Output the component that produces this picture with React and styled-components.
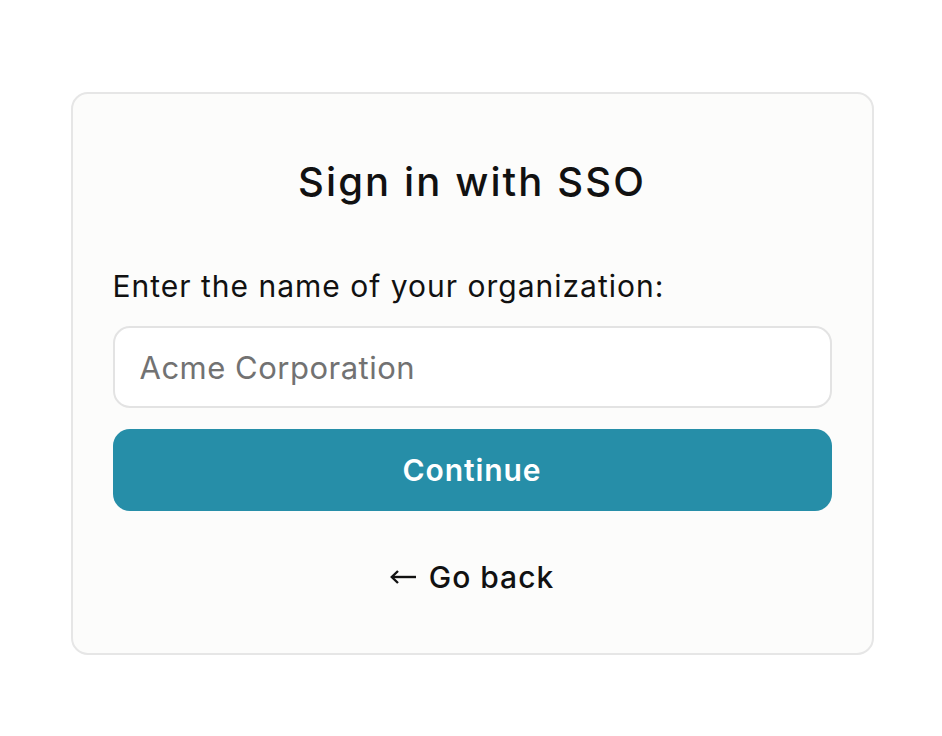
import React, { useState } from "react";
import styled, { createGlobalStyle } from "styled-components";

const GlobalStyle = createGlobalStyle`
  html, body {
    margin: 0;
    padding: 0;
    background: #ffffff;
    font-family: Inter, "Noto Sans", sans-serif;
    color: #111111;
  }
  * {
    box-sizing: border-box;
  }
`;

const Page = styled.div`
  display: flex;
  justify-content: center;
  padding: 92px 0 0 2px;
`;

const Card = styled.form`
  width: 803px;
  display: flex;
  flex-direction: column;
  padding: 65px 40px 56px;
  background: #fcfcfb;
  border: 2px solid #e6e6e6;
  border-radius: 17px;
`;

const Title = styled.h1`
  margin: 0 0 61px;
  font-size: 40px;
  line-height: 46px;
  font-weight: 500;
  letter-spacing: 2.1px;
  text-align: center;
  color: #111111;
`;

const Label = styled.label`
  font-size: 30px;
  line-height: 40px;
  font-weight: 400;
  letter-spacing: 1px;
  color: #111111;
  margin-bottom: 20px;
`;

const Input = styled.input`
  height: 82px;
  padding: 0 25px;
  font-family: inherit;
  font-size: 31px;
  letter-spacing: 0.5px;
  color: #111111;
  background: #ffffff;
  border: 2px solid #e3e3e3;
  border-radius: 17px;
  outline: none;

  &::placeholder {
    color: #727272;
  }
`;

const Button = styled.button`
  margin-top: 21px;
  height: 82px;
  border: none;
  border-radius: 17px;
  background: #268ea8;
  color: #ffffff;
  font-family: inherit;
  font-size: 30px;
  font-weight: 600;
  letter-spacing: 0.9px;
  cursor: pointer;
`;

const BackLink = styled.a`
  margin-top: 46px;
  align-self: center;
  display: flex;
  align-items: center;
  gap: 12px;
  font-size: 30px;
  line-height: 40px;
  font-weight: 500;
  letter-spacing: 1px;
  color: #111111;
  text-decoration: none;
  cursor: pointer;
`;

const Arrow = styled.svg`
  width: 27px;
  height: 14px;
  flex: none;
`;

export default function App() {
  const [org, setOrg] = useState("");

  return (
    <>
      <GlobalStyle />
      <Page>
        <Card onSubmit={(e) => e.preventDefault()}>
          <Title>Sign in with SSO</Title>
          <Label htmlFor="org">Enter the name of your organization:</Label>
          <Input
            id="org"
            placeholder="Acme Corporation"
            value={org}
            onChange={(e) => setOrg(e.target.value)}
          />
          <Button type="submit">Continue</Button>
          <BackLink href="#">
            <Arrow viewBox="0 0 27 14" fill="none" stroke="#111" strokeWidth="2.4">
              <path d="M26 7H2" />
              <path d="M8 1L1.8 7L8 13" strokeLinejoin="miter" />
            </Arrow>
            <span>Go back</span>
          </BackLink>
        </Card>
      </Page>
    </>
  );
}
